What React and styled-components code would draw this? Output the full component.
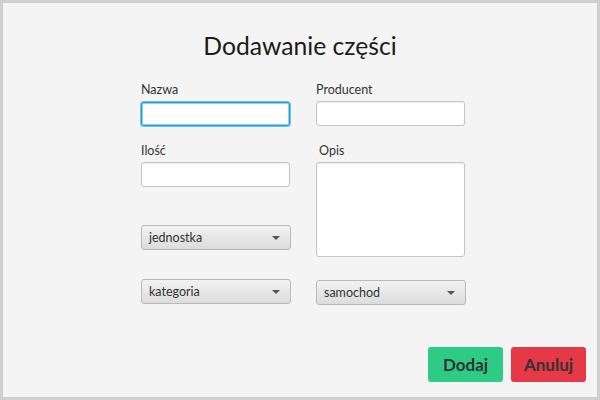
import React from "react";
import styled, { createGlobalStyle } from "styled-components";

const Global = createGlobalStyle`
  html, body { margin: 0; padding: 0; background: #d4d4d4; }
  * { box-sizing: border-box; }
`;

const Window = styled.div`
  width: 600px;
  height: 400px;
  border: 3px solid #cfcfcf;
  background: #f4f4f4;
  font-family: "Lato", "Open Sans", sans-serif;
  color: #333;
  display: flex;
  flex-direction: column;
  position: relative;
`;

const Title = styled.h1`
  margin: 0;
  padding-top: 26px;
  height: 79px;
  font-weight: 400;
  font-size: 24.7px;
  line-height: 34px;
  text-align: center;
  color: #1a1a1a;
`;

const Form = styled.div`
  display: flex;
  gap: 25px;
  padding-left: 138px;
`;

const Column = styled.div`
  width: 150px;
  display: flex;
  flex-direction: column;
`;

const Label = styled.label`
  font-size: 12.5px;
  line-height: 16px;
  height: 16px;
  margin-bottom: ${(p) => p.$mb || 3}px;
  padding-left: ${(p) => p.$indent || 0}px;
  color: #333;
`;

const Field = styled.div`
  width: 149px;
  height: ${(p) => p.$h || 25}px;
  background: #fff;
  border: 1px solid ${(p) => (p.$focus ? "#1a9fd9" : "#c4c4c4")};
  border-radius: 3px;
  box-shadow: ${(p) =>
    p.$focus
      ? "0 0 0 1px #6cc3ea, inset 0 0 0 1px #8fd1ee"
      : "inset 0 1px 1px rgba(0,0,0,0.06)"};
  margin-bottom: ${(p) => p.$mb || 0}px;
`;

const Combo = styled.div`
  width: 150px;
  height: 25px;
  border: 1px solid #b9b9b9;
  border-radius: 3px;
  background: linear-gradient(#f2f2f2, #dcdcdc);
  display: flex;
  align-items: center;
  justify-content: space-between;
  padding: 0 10px 0 7px;
  font-size: 12.5px;
  color: #333;
  margin-top: ${(p) => p.$mt || 0}px;
`;

const Arrow = styled.span`
  width: 0;
  height: 0;
  border-left: 4px solid transparent;
  border-right: 4px solid transparent;
  border-top: 4px solid #555;
`;

const Buttons = styled.div`
  margin-top: auto;
  display: flex;
  justify-content: flex-end;
  gap: 8px;
  padding: 0 11px 15px 0;
`;

const Button = styled.button`
  width: 75px;
  height: 35px;
  border: none;
  border-radius: 3px;
  background: ${(p) => p.$bg};
  color: #333;
  font-family: "Lato", "Open Sans", sans-serif;
  font-weight: 700;
  font-size: 17px;
  padding: 0;
`;

export default function App() {
  return (
    <>
      <Global />
      <Window>
        <Title>Dodawanie części</Title>
        <Form>
          <Column>
            <Label $mb={4}>Nazwa</Label>
            <Field $focus $h={24} $mb={17} />
            <Label>Ilość</Label>
            <Field $h={25} />
            <Combo $mt={38}>
              jednostka <Arrow />
            </Combo>
            <Combo $mt={29}>
              kategoria <Arrow />
            </Combo>
          </Column>
          <Column>
            <Label $mb={3}>Producent</Label>
            <Field $h={25} $mb={17} />
            <Label $indent={3}>Opis</Label>
            <Field $h={95} />
            <Combo $mt={23}>
              samochod <Arrow />
            </Combo>
          </Column>
        </Form>
        <Buttons>
          <Button $bg="#2ecb85">Dodaj</Button>
          <Button $bg="#e63947">Anuluj</Button>
        </Buttons>
      </Window>
    </>
  );
}
